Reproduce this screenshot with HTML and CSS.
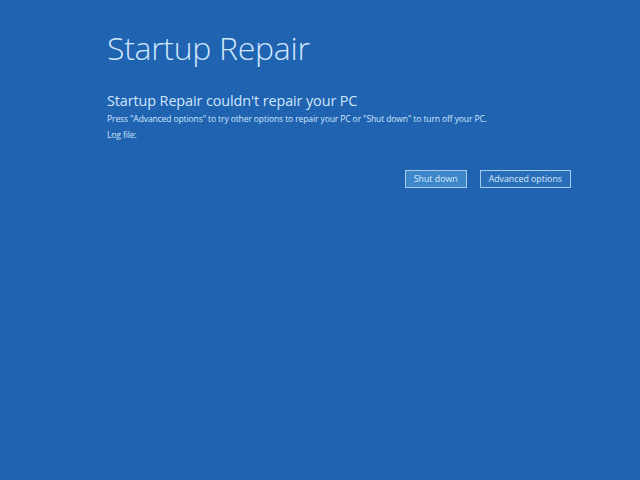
FILE: index.html
```html
<!DOCTYPE html>
<html lang="en">
<head>
    <meta charset="UTF-8">
    <title>Startup Repair</title>
    <link rel="stylesheet" href="styles.css">
</head>
<body>
    <main class="screen">
        <h1 class="title">Startup Repair</h1>
        <h2 class="subtitle">Startup Repair couldn't repair your PC</h2>
        <p class="message">Press "Advanced options" to try other options to repair your PC or "Shut down" to turn off your PC.</p>
        <p class="message">Log file:</p>
        <div class="actions">
            <button class="btn btn-default">Shut down</button>
            <button class="btn">Advanced options</button>
        </div>
    </main>
</body>
</html>
```

FILE: styles.css
```css
html, body {
    margin: 0;
    padding: 0;
    height: 100%;
    background-color: #1f63b1;
}

body {
    font-family: "Open Sans", "Noto Sans", sans-serif;
    color: #cfe6fb;
}

.screen {
    padding: 24px 0 0 107px;
    width: 464px;
}

.title {
    margin: 0;
    font-size: 32px;
    font-weight: 300;
    line-height: 48px;
    letter-spacing: -0.3px;
}

.subtitle {
    margin: 19px 0 0;
    font-size: 14.4px;
    font-weight: 400;
    line-height: 20px;
    letter-spacing: -0.1px;
}

.message {
    margin: 0;
    font-size: 8.5px;
    line-height: 16px;
    letter-spacing: -0.1px;
    white-space: nowrap;
}

.actions {
    display: flex;
    justify-content: flex-end;
    gap: 13px;
    margin-top: 27px;
}

.btn {
    font-family: inherit;
    font-size: 8.8px;
    color: #d8ebfb;
    background-color: #2a6db8;
    border: 1px solid #a7cdee;
    height: 18px;
    padding: 0 8px;
    cursor: pointer;
}

.btn-default {
    background-color: #3d86c9;
}
```
